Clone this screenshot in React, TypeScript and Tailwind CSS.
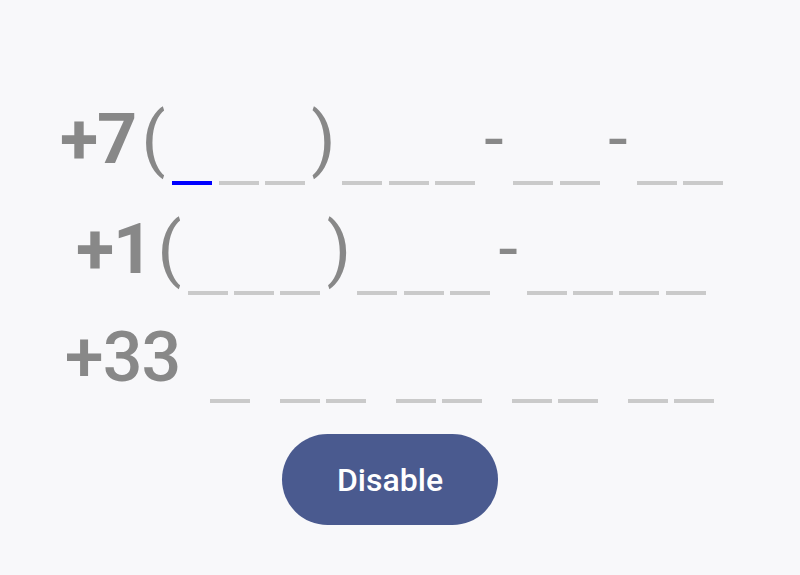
import React from "react";

type SlotProps = { active?: boolean };
function Slot({ active }: SlotProps) {
  return (
    <div className="w-[46.5px] h-[81px] flex items-end justify-center shrink-0">
      <div className={active ? "w-[40px] h-[4px] bg-[#0000ff]" : "w-[40px] h-[4px] bg-[#cacaca]"} />
    </div>
  );
}

function Slot2() {
  return (
    <div className="w-[46.3px] h-[81px] flex items-end justify-center shrink-0">
      <div className="w-[40px] h-[4px] bg-[#cacaca]" />
    </div>
  );
}

function Punct({ ch, className }: { ch: string; className: string }) {
  return (
    <div className={"h-[81px] text-[70px] leading-[70px] text-center font-normal text-[#888888] shrink-0 " + className}>
      {ch}
    </div>
  );
}

function Label({ text, className }: { text: string; className: string }) {
  return (
    <div className={"h-[81px] text-[70px] leading-[70px] text-right text-[#888888] shrink-0 tracking-[-1px] " + className}>
      {text}
    </div>
  );
}

function Space() {
  return <div className="w-[23.5px] h-[81px] shrink-0" />;
}

export default function App() {
  return (
    <div className="min-h-screen w-full bg-[#f8f8fa] font-['Roboto',sans-serif] flex flex-col pt-[104px]">
      {/* +7 (___) ___-__-__ */}
      <div className="flex items-start">
        <Label text="+7" className="w-[138.25px] font-bold pr-[2px]" />
        <Punct ch="(" className="w-[30.5px]" />
        <Slot active />
        <Slot />
        <Slot />
        <Punct ch=")" className="w-[30.5px]" />
        <Slot />
        <Slot />
        <Slot />
        <Punct ch="-" className="w-[31.5px]" />
        <Slot />
        <Slot />
        <Punct ch="-" className="w-[30.5px]" />
        <Slot />
        <Slot />
      </div>

      {/* +1 (___) ___-____ */}
      <div className="flex items-start mt-[29px]">
        <Label text="+1" className="w-[154.25px] font-bold pr-[2px]" />
        <Punct ch="(" className="w-[30.5px]" />
        <Slot2 />
        <Slot2 />
        <Slot2 />
        <Punct ch=")" className="w-[30.5px]" />
        <Slot2 />
        <Slot2 />
        <Slot2 />
        <Punct ch="-" className="w-[30.5px]" />
        <Slot2 />
        <Slot2 />
        <Slot2 />
        <Slot2 />
      </div>

      {/* +33 _ __ __ __ __ */}
      <div className="flex items-start mt-[27px]">
        <Label text="+33" className="w-[182.25px] font-medium pr-[2px]" />
        <div className="w-[24.5px] h-[81px] shrink-0" />
        <Slot2 />
        <Space />
        <Slot2 />
        <Slot2 />
        <Space />
        <Slot2 />
        <Slot2 />
        <Space />
        <Slot2 />
        <Slot2 />
        <Space />
        <Slot2 />
        <Slot2 />
      </div>

      <div className="flex justify-center pr-[20px] mt-[31px]">
        <button className="w-[216px] h-[91px] rounded-full bg-[#4a5a8f] text-white text-[32px] font-medium leading-none">
          Disable
        </button>
      </div>
    </div>
  );
}
